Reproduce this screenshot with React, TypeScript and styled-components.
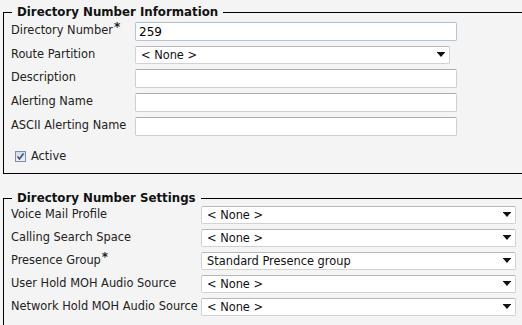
import styled, { createGlobalStyle } from "styled-components";

const GlobalStyle = createGlobalStyle`
    html, body {
        margin: 0;
        padding: 0;
        background: #f4f4f4;
        overflow: hidden;
    }
    body {
        font-family: "DejaVu Sans", Verdana, sans-serif;
        font-size: 11.4px;
        color: #222;
    }
`;

const Page = styled.div`
    width: 522px;
    height: 325px;
    padding-top: 5px;
    box-sizing: border-box;
    overflow: hidden;
`;

const Fieldset = styled.fieldset<{ $mt?: number }>`
    margin: ${(p) => p.$mt ?? 0}px 0 0 3px;
    width: 580px;
    box-sizing: border-box;
    border: 1px solid #000;
    padding: ${(p) => (p.$mt ? 1 : 3)}px 0 9px 7px;
    min-width: 0;
`;

const Legend = styled.legend`
    margin-left: 1px;
    padding: 0 5px;
    font-weight: bold;
    font-size: 11.8px;
    line-height: 14px;
    color: #111;
`;

const Rows = styled.div<{ $gap: number }>`
    display: flex;
    flex-direction: column;
    gap: ${(p) => p.$gap}px;
`;

const Row = styled.div<{ $labelWidth: number }>`
    display: grid;
    grid-template-columns: ${(p) => p.$labelWidth}px auto;
    align-items: start;
`;

const Label = styled.div`
    line-height: 14px;
    padding-top: 1px;
    white-space: nowrap;
`;

const Star = styled.sup`
    font-size: 12px;
    font-weight: bold;
    line-height: 0;
    vertical-align: 3px;
    margin-left: 1px;
`;

const TextInput = styled.div<{ $focus?: boolean }>`
    width: 322px;
    height: 19px;
    box-sizing: border-box;
    background: #fff;
    border: 1px solid ${(p) => (p.$focus ? "#b0c6d8" : "#cfcfcf")};
    border-top-color: ${(p) => (p.$focus ? "#a9bfd2" : "#ababab")};
    border-radius: 2px;
    padding: 1px 3px 0;
    font-size: 12px;
    line-height: 16px;
    color: #000;
`;

const Select = styled.div`
    width: 315px;
    height: 18px;
    box-sizing: border-box;
    background: #fff;
    border: 1px solid #d2d2d2;
    border-top-color: #b8b8b8;
    border-radius: 2px;
    padding: 0 4px 0 5px;
    display: flex;
    align-items: center;
    justify-content: space-between;
    font-size: 11.4px;
    color: #111;
`;

const Arrow = () => (
    <svg width="8" height="6" viewBox="0 0 8 6">
        <rect x="0" y="0" width="8" height="1" fill="#111" />
        <polygon points="0.5,1 7.5,1 4,5" fill="#111" />
    </svg>
);

const CheckRow = styled.label`
    display: flex;
    align-items: center;
    gap: 5px;
    margin: 12px 0 0 4px;
    height: 16px;
    line-height: 14px;
`;

const CheckBox = styled.span`
    width: 11px;
    height: 11px;
    box-sizing: border-box;
    border: 1px solid #7f8fa3;
    background: linear-gradient(#d5dde8, #eef2f7);
    display: inline-flex;
    align-items: center;
    justify-content: center;
`;

const infoRows = [
    { label: "Directory Number", required: true, value: "259", kind: "input", focus: true },
    { label: "Route Partition", value: "< None >", kind: "select" },
    { label: "Description", value: "", kind: "input" },
    { label: "Alerting Name", value: "", kind: "input" },
    { label: "ASCII Alerting Name", value: "", kind: "input" },
];

const settingRows = [
    { label: "Voice Mail Profile", value: "< None >" },
    { label: "Calling Search Space", value: "< None >" },
    { label: "Presence Group", value: "Standard Presence group", required: true },
    { label: "User Hold MOH Audio Source", value: "< None >" },
    { label: "Network Hold MOH Audio Source", value: "< None >" },
];

export default function App() {
    return (
        <Page>
            <GlobalStyle />
            <Fieldset>
                <Legend>Directory Number Information</Legend>
                <Rows $gap={5}>
                    {infoRows.map((r) => (
                        <Row key={r.label} $labelWidth={124}>
                            <Label>
                                {r.label}
                                {r.required && <Star>*</Star>}
                            </Label>
                            {r.kind === "select" ? (
                                <Select>
                                    <span>{r.value}</span>
                                    <Arrow />
                                </Select>
                            ) : (
                                <TextInput $focus={r.focus}>{r.value}</TextInput>
                            )}
                        </Row>
                    ))}
                </Rows>
                <CheckRow>
                    <CheckBox>
                        <svg width="9" height="9" viewBox="0 0 9 9">
                            <path d="M1.5 4.5 L3.5 7 L7.5 1.5" stroke="#3d4f72" strokeWidth="1.6" fill="none" />
                        </svg>
                    </CheckBox>
                    Active
                </CheckRow>
            </Fieldset>
            <Fieldset $mt={17}>
                <Legend>Directory Number Settings</Legend>
                <Rows $gap={5}>
                    {settingRows.map((r) => (
                        <Row key={r.label} $labelWidth={190}>
                            <Label>
                                {r.label}
                                {r.required && <Star>*</Star>}
                            </Label>
                            <Select>
                                <span>{r.value}</span>
                                <Arrow />
                            </Select>
                        </Row>
                    ))}
                </Rows>
            </Fieldset>
        </Page>
    );
}
